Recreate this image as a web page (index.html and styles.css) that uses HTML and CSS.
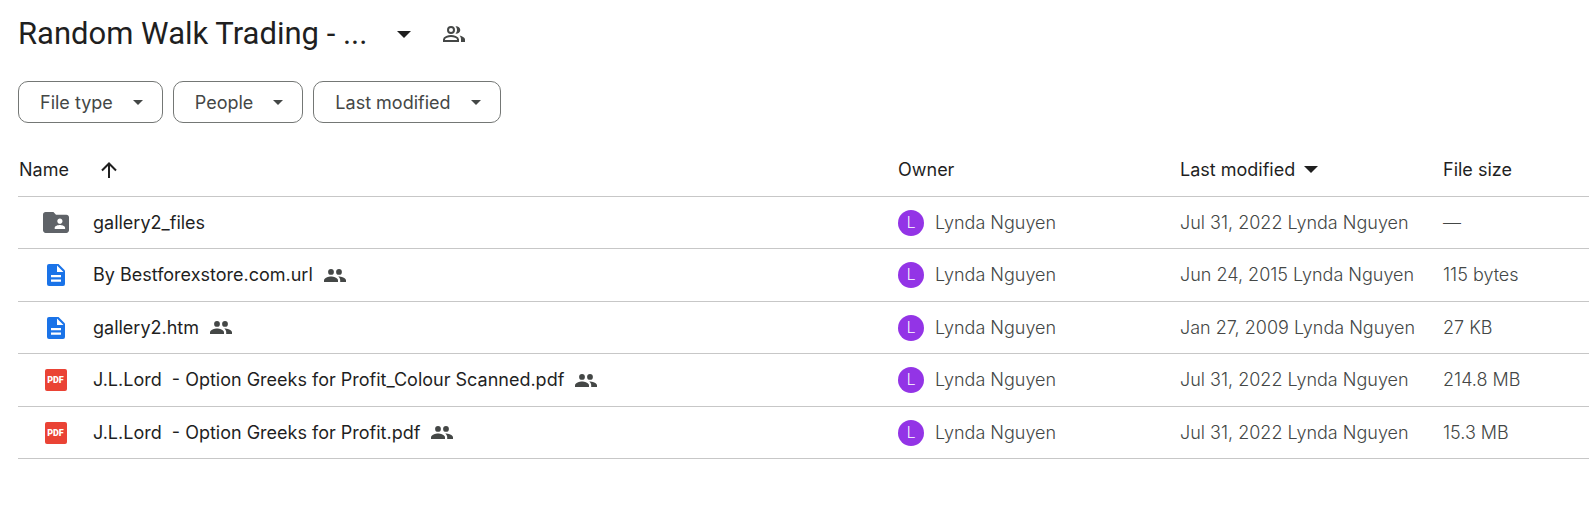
FILE: index.html
```html
<!DOCTYPE html>
<html lang="en">
<head>
<meta charset="utf-8">
<title>Random Walk Trading</title>
<link rel="stylesheet" href="styles.css">
</head>
<body>
<svg class="sprite" aria-hidden="true">
  <symbol id="caret" viewBox="0 0 14 7"><path d="M0 0h14L7 7z"/></symbol>
  <symbol id="people" viewBox="0 0 22 13">
    <circle cx="7" cy="2.900" r="2.900"/><path d="M0 13v-1.700C0 8.600 4.700 7.400 7 7.400s7 1.200 7 3.900V13z"/>
    <circle cx="15" cy="2.900" r="2.900"/><path d="M14.200 7.400c3 0 7.800 1.300 7.800 3.900V13h-5.800v-1.700c0-1.600-.7-2.900-2-3.900z"/>
  </symbol>
  <symbol id="doc" viewBox="0 0 18 22">
    <path fill="#1a73e8" d="M2 0h9.500L18 6.500V20a2 2 0 0 1-2 2H2a2 2 0 0 1-2-2V2a2 2 0 0 1 2-2z"/>
    <path fill="#fff" d="M10 1.500V8h6.500zM4 11h10v2.200H4zM4 15.500h10v2.200H4z"/>
  </symbol>
  <symbol id="folder" viewBox="2 4 20 16">
    <path fill="#5f6368" d="M20 6h-8l-2-2H4C2.900 4 2 4.900 2 6v12c0 1.100.9 2 2 2h16c1.100 0 2-.9 2-2V8c0-1.100-.9-2-2-2z"/>
    <path fill="#fff" d="M15 9c1.100 0 2 .9 2 2s-.9 2-2 2-2-.9-2-2 .9-2 2-2zm4 8h-8v-1c0-1.330 2.670-2 4-2s4 .67 4 2z"/>
  </symbol>
</svg>

<header class="title-bar">
  <h1 class="title"><button class="title-button" type="button"><span>Random Walk Trading - ...</span><svg class="caret-title"><use href="#caret"/></svg></button></h1>
  <button class="share-button" type="button" aria-label="Shared">
    <svg class="share-icon" viewBox="0 0 22 16"><g fill="none" stroke="#444746" stroke-width="2"><circle cx="8" cy="4" r="3"/><path d="M1 15v-1.500C1 11.200 5.500 10 8 10s7 1.200 7 3.500V15z"/></g><path fill="#444746" d="M12.500 7.800a5.500 5.500 0 0 0 0-7.600C15 0 17.300 1.500 17.300 4s-2.300 4-4.800 3.800zM16.500 9.400c2.300.6 5.500 1.800 5.500 4V16h-4v-2.600c0-1.600-.6-2.900-1.500-4z"/></svg>
  </button>
</header>

<div class="chips">
  <button class="chip" type="button">File type<svg class="caret-chip"><use href="#caret"/></svg></button>
  <button class="chip" type="button">People<svg class="caret-chip"><use href="#caret"/></svg></button>
  <button class="chip" type="button">Last modified<svg class="caret-chip"><use href="#caret"/></svg></button>
</div>

<table class="files">
  <colgroup><col><col class="col-owner"><col class="col-modified"><col class="col-size"></colgroup>
  <thead>
    <tr>
      <th scope="col"><div class="head head-name">Name<button class="sort" type="button" aria-label="Sort ascending"><svg class="arrow" viewBox="0 0 16 16"><path d="M8 16V1.500M1 8.500l7-7 7 7"/></svg></button></div></th>
      <th scope="col">Owner</th>
      <th scope="col"><button class="head sort-menu" type="button">Last modified<svg class="caret-head"><use href="#caret"/></svg></button></th>
      <th scope="col">File size</th>
    </tr>
  </thead>
  <tbody>
    <tr>
      <td><div class="file"><span class="type"><svg class="icon-folder"><use href="#folder"/></svg></span><span>gallery2_files</span></div></td>
      <td><div class="owner"><span class="avatar">L</span>Lynda Nguyen</div></td>
      <td><div class="modified"><span>Jul 31, 2022</span><span>Lynda Nguyen</span></div></td>
      <td>—</td>
    </tr>
    <tr>
      <td><div class="file"><span class="type"><svg class="icon-doc"><use href="#doc"/></svg></span><span>By Bestforexstore.com.url</span><svg class="shared"><use href="#people"/></svg></div></td>
      <td><div class="owner"><span class="avatar">L</span>Lynda Nguyen</div></td>
      <td><div class="modified"><span>Jun 24, 2015</span><span>Lynda Nguyen</span></div></td>
      <td>115 bytes</td>
    </tr>
    <tr>
      <td><div class="file"><span class="type"><svg class="icon-doc"><use href="#doc"/></svg></span><span>gallery2.htm</span><svg class="shared"><use href="#people"/></svg></div></td>
      <td><div class="owner"><span class="avatar">L</span>Lynda Nguyen</div></td>
      <td><div class="modified"><span>Jan 27, 2009</span><span>Lynda Nguyen</span></div></td>
      <td>27 KB</td>
    </tr>
    <tr>
      <td><div class="file"><span class="type"><span class="icon-pdf">PDF</span></span><span>J.L.Lord&nbsp; - Option Greeks for Profit_Colour Scanned.pdf</span><svg class="shared"><use href="#people"/></svg></div></td>
      <td><div class="owner"><span class="avatar">L</span>Lynda Nguyen</div></td>
      <td><div class="modified"><span>Jul 31, 2022</span><span>Lynda Nguyen</span></div></td>
      <td>214.8 MB</td>
    </tr>
    <tr>
      <td><div class="file"><span class="type"><span class="icon-pdf">PDF</span></span><span>J.L.Lord&nbsp; - Option Greeks for Profit.pdf</span><svg class="shared"><use href="#people"/></svg></div></td>
      <td><div class="owner"><span class="avatar">L</span>Lynda Nguyen</div></td>
      <td><div class="modified"><span>Jul 31, 2022</span><span>Lynda Nguyen</span></div></td>
      <td>15.3 MB</td>
    </tr>
  </tbody>
</table>
</body>
</html>
```

FILE: styles.css
```css
* { box-sizing: border-box; }
body {
  margin: 0;
  padding: 12px 0 0 18px;
  background: #fff;
  color: #1f1f1f;
  font: 400 18px/24px Inter, sans-serif;
}
button {
  font: inherit;
  color: inherit;
  background: none;
  border: 0;
  padding: 0;
}
svg { display: block; flex: none; fill: #1f1f1f; }
.sprite { position: absolute; width: 0; height: 0; }

.title-bar { display: flex; align-items: center; gap: 32px; height: 44px; }
.title { margin: 0; font: 400 31px/40px Roboto, sans-serif; }
.title-button { display: flex; align-items: center; gap: 30px; }
.caret-title { width: 14px; height: 7px; }
.share-icon { width: 22px; height: 16px; }

.chips { display: flex; gap: 10px; margin-top: 25px; }
.chip {
  display: flex;
  align-items: center;
  gap: 20px;
  height: 42px;
  padding: 1px 19px 0 21px;
  border: 1px solid #747775;
  border-radius: 10px;
  color: #444746;
}
.caret-chip { width: 10px; height: 5px; fill: #444746; }

.files {
  width: 100%;
  margin-top: 22px;
  border-collapse: separate;
  border-spacing: 0;
  table-layout: fixed;
}
.col-owner { width: 282px; }
.col-modified { width: 263px; }
.col-size { width: 146px; }
.files th, .files td {
  height: 52px;
  padding: 0;
  border-bottom: 1px solid #c7c7c7;
  text-align: left;
  white-space: nowrap;
}
.files th { font-weight: 400; padding-bottom: 2px; }
.files td { color: #444746; font-weight: 300; }
.files tbody tr:nth-child(even) td { height: 53px; }
.head { display: flex; align-items: center; }
.head-name { gap: 32px; padding-left: 1px; }
.sort-menu { gap: 9px; }
.caret-head { width: 14px; height: 7px; }
.arrow { width: 16px; height: 16px; fill: none; stroke: #1f1f1f; stroke-width: 2; }

.files .file { display: flex; align-items: center; color: #1f1f1f; font-weight: 400; }
.type { display: flex; justify-content: center; width: 75px; }
.icon-folder { width: 26px; height: 21px; }
.icon-doc { width: 18px; height: 22px; }
.icon-pdf {
  width: 22px;
  height: 22px;
  border-radius: 2px;
  background: #ea4335;
  color: #fff;
  font: 900 9px/22px Roboto, sans-serif;
  text-align: center;
}
.shared { width: 22px; height: 13px; margin-left: 11px; fill: #444746; }
.owner { display: flex; align-items: center; gap: 11px; }
.avatar {
  width: 26px;
  height: 26px;
  border-radius: 50%;
  background: #9334e6;
  color: #fff;
  font: 300 16px/26px Roboto, sans-serif;
  text-align: center;
}
.modified { display: flex; gap: 5px; }
```
